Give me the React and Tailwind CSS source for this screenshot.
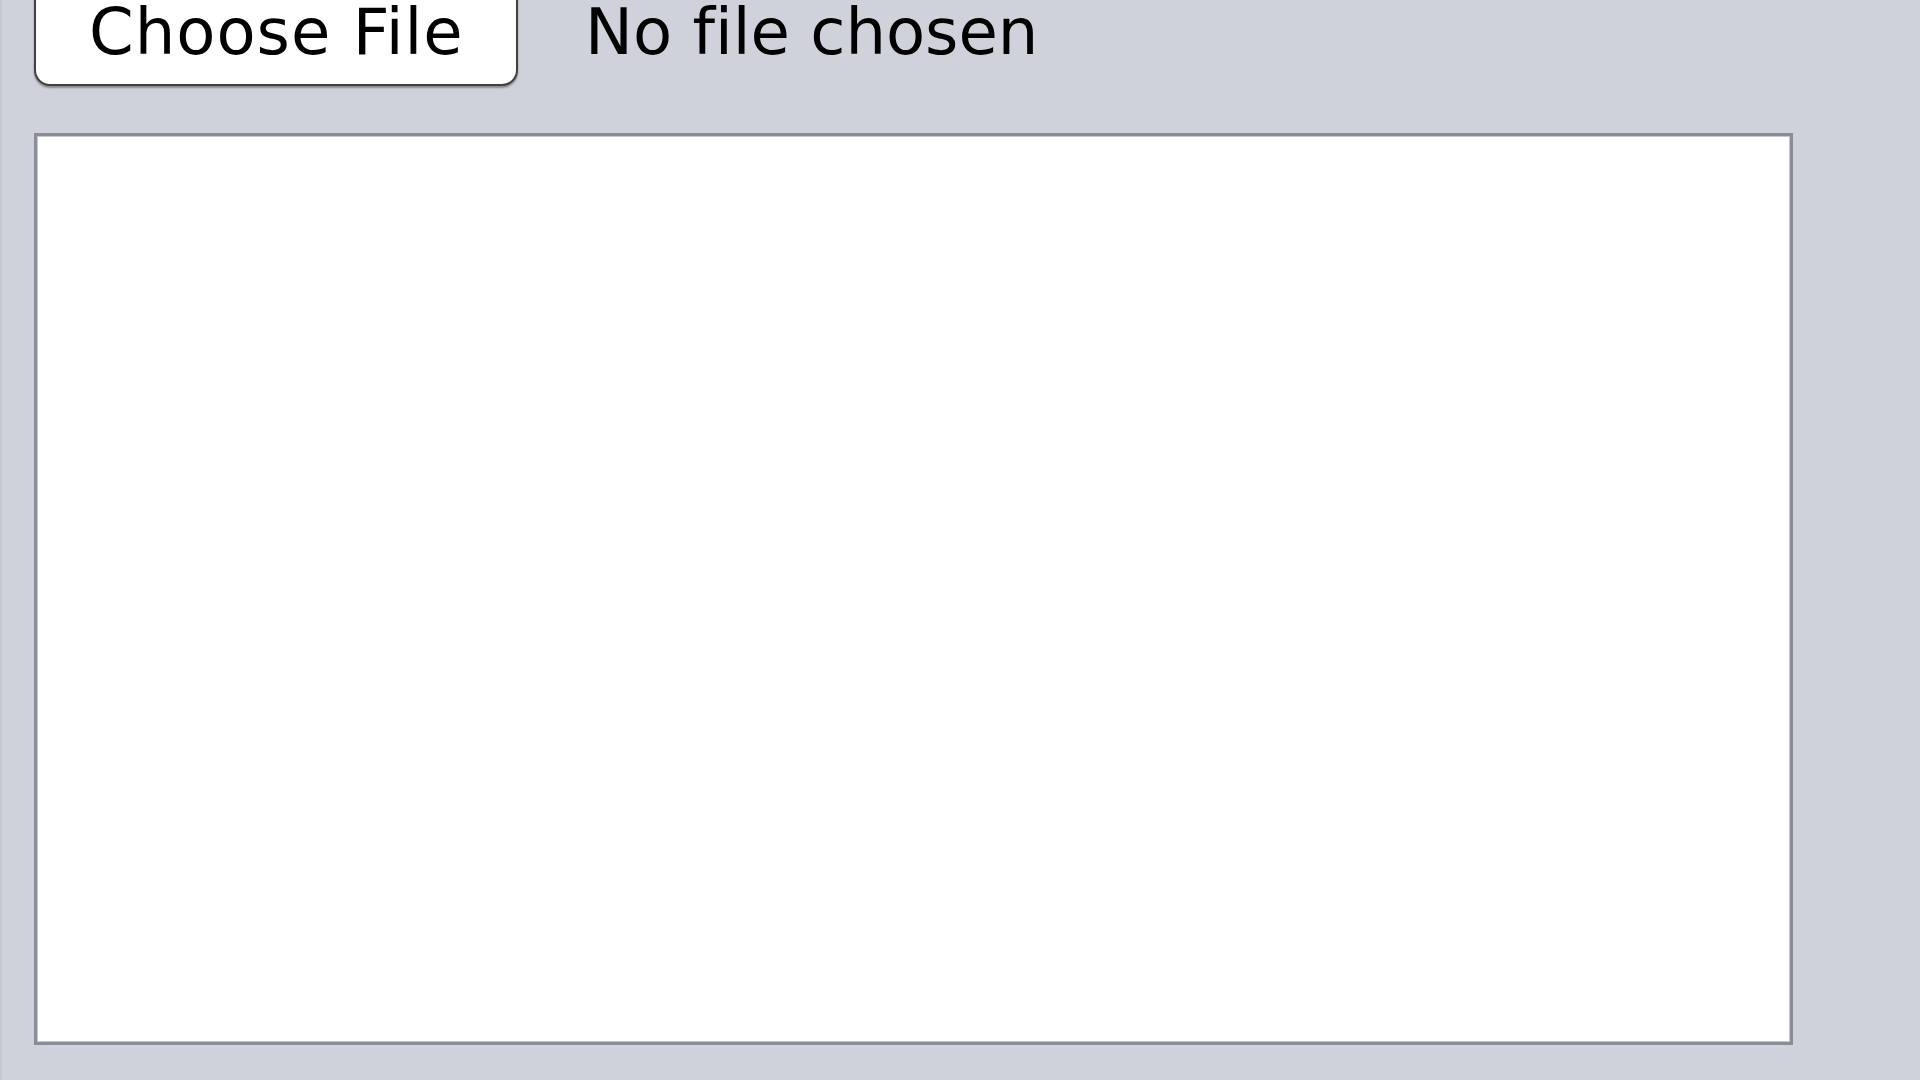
import React from 'react'

const App = () => {
  return (
    <div
      className="w-[1920px] h-[1080px] overflow-hidden bg-[#cfd2da] border-l-2 border-[#c6c9d0] pl-[32px] [font-variant-ligatures:none]"
      style={{ fontFamily: '"DejaVu Sans", "Liberation Sans", sans-serif' }}
    >
      {/* file picker row, scrolled so the top of the button is cut off */}
      <div className="flex items-center -mt-[19px] text-[64px] leading-[75px] text-black">
        <button
          type="button"
          className="w-[484px] pt-[12px] pb-[14px] pl-[53px] text-left tracking-[1px] bg-white border-2 border-[#3f3f3f] rounded-[16px] shadow-[0_2px_2px_rgba(0,0,0,0.35)]"
        >
          Choose File
        </button>
        <span className="ml-[67px] -mt-[2px]">No file chosen</span>
      </div>

      {/* text area */}
      <textarea
        className="block mt-[47px] w-[1759px] h-[912px] resize-none bg-white border-[3px] border-[#898d95] shadow-[inset_0_0_0_1px_#c3c6cc] outline-none"
        readOnly
      />
    </div>
  )
}

export default App
